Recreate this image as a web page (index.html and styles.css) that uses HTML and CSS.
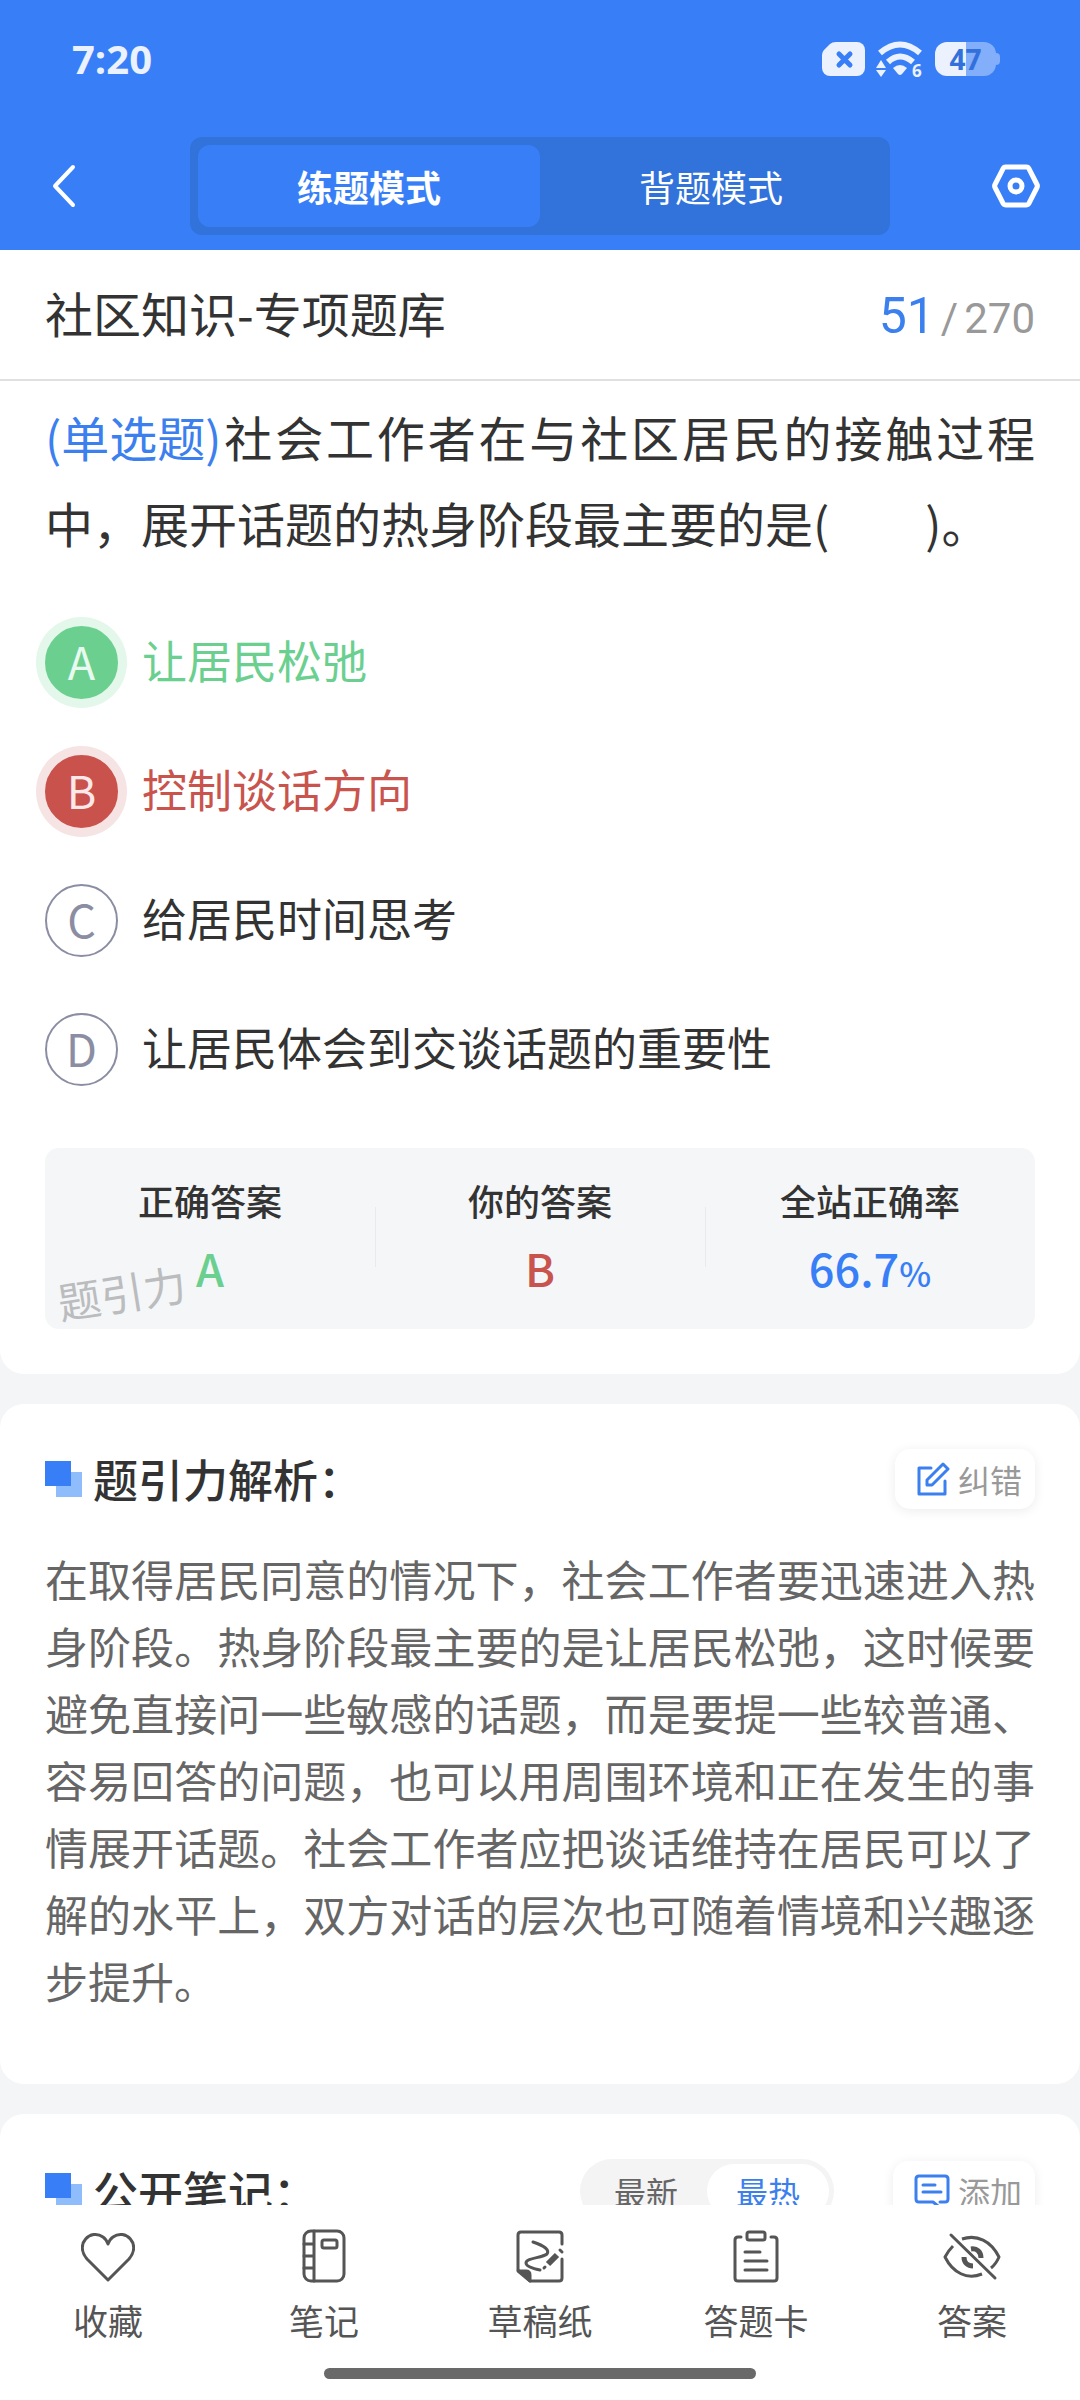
FILE: index.html
```html
<!DOCTYPE html>
<html lang="zh-CN">
  <head>
    <meta charset="utf-8" />
    <title>社区知识-专项题库</title>
    <meta name="viewport" content="width=device-width, initial-scale=1" />
    <link rel="stylesheet" href="styles.css">
  </head>

  <body>
    <header class="top">
      <div class="status">
        <span class="time">7:20</span>
        <div class="status-icons">
          <svg width="43" height="36" viewBox="0 0 43 36">
            <path d="M14 1h21a8 8 0 0 1 8 8v18a8 8 0 0 1-8 8H8a8 8 0 0 1-8-8V14q0-3 2-5l6-6q2-2 6-2z" fill="#ebf2fe"/>
            <path d="M17 13l11 11M28 13L17 24" stroke="#387ff7" stroke-width="5" stroke-linecap="round"/>
          </svg>
          <svg width="48" height="36" viewBox="0 0 48 36">
            <g fill="none" stroke="#ebf2fe" stroke-width="6">
              <path d="M4 12Q24-5 44 12"/>
              <path d="M12 21Q24 10 37 21"/>
            </g>
            <g fill="#ebf2fe">
              <path d="M17 27q7-6 14 0l-5 6q-2 2-4 0z"/>
              <path d="M0 27l5-8 5 8zM0 29h10l-5 7z"/>
            </g>
            <text class="wifi-gen" x="36" y="36">6</text>
          </svg>
          <div class="battery">
            <span>47</span>
          </div>
        </div>
      </div>

      <nav class="nav">
        <button class="nav-btn" type="button" aria-label="返回">
          <svg width="24" height="44" viewBox="0 0 24 44" fill="none" stroke="#fff" stroke-width="4" stroke-linecap="round" stroke-linejoin="round">
            <path d="M21 3L3 22l18 19"/>
          </svg>
        </button>
        <div class="modes">
          <button class="mode active" type="button">练题模式</button>
          <button class="mode" type="button">背题模式</button>
        </div>
        <button class="nav-btn" type="button" aria-label="设置">
          <svg width="48" height="44" viewBox="0 0 48 44" fill="none" stroke="#fff" stroke-width="5" stroke-linejoin="round">
            <path d="M13.500 3h21q1.500 0 2.300 1.300L45 20.500q.8 1.500 0 3l-8.200 16.200Q36 41 34.500 41h-21q-1.500 0-2.300-1.300L3 23.500q-.8-1.500 0-3L11.200 4.300Q12 3 13.500 3z"/>
            <circle cx="24" cy="22" r="6"/>
          </svg>
        </button>
      </nav>
    </header>

    <main class="content">
      <section class="card question-card">
        <div class="bank">
          <h1>社区知识-专项题库</h1>
          <p class="count"><b>51</b><span>/</span><span>270</span></p>
        </div>

        <div class="question">
          <p class="stem"><span class="type">(单选题)</span>社会工作者在与社区居民的接触过程中，展开话题的热身阶段最主要的是(&emsp;&emsp;)。</p>

          <div class="options">
            <button class="option right" type="button"><i>A</i>让居民松弛</button>
            <button class="option wrong" type="button"><i>B</i>控制谈话方向</button>
            <button class="option" type="button"><i>C</i>给居民时间思考</button>
            <button class="option" type="button"><i>D</i>让居民体会到交谈话题的重要性</button>
          </div>

          <div class="result">
            <dl>
              <dt>正确答案</dt>
              <dd class="green">A</dd>
            </dl>
            <dl>
              <dt>你的答案</dt>
              <dd class="red">B</dd>
            </dl>
            <dl>
              <dt>全站正确率</dt>
              <dd class="blue">66.7<small>%</small></dd>
            </dl>
            <span class="watermark">题引力</span>
          </div>
        </div>
      </section>

      <section class="card">
        <div class="card-head">
          <h2>题引力解析：</h2>
          <button class="chip" type="button">
            <svg width="34" height="34" viewBox="0 0 34 34" fill="none" stroke="#3b80ee" stroke-width="3" stroke-linecap="round" stroke-linejoin="round">
              <path d="M15 6H3v26h26V19"/>
              <path d="M27 2l5 5-16 16h-5v-5z"/>
            </svg>
            纠错
          </button>
        </div>
        <p class="analysis-text">在取得居民同意的情况下，社会工作者要迅速进入热身阶段。热身阶段最主要的是让居民松弛，这时候要避免直接问一些敏感的话题，而是要提一些较普通、容易回答的问题，也可以用周围环境和正在发生的事情展开话题。社会工作者应把谈话维持在居民可以了解的水平上，双方对话的层次也可随着情境和兴趣逐步提升。</p>
      </section>

      <section class="card">
        <div class="card-head">
          <h2>公开笔记：</h2>
          <div class="head-actions">
            <div class="sort">
              <button type="button">最新</button>
              <button class="active" type="button">最热</button>
            </div>
            <button class="chip" type="button">
              <svg width="36" height="34" viewBox="0 0 36 34" fill="none" stroke="#3b80ee" stroke-width="3" stroke-linecap="round" stroke-linejoin="round">
                <path d="M26 28h5q3 0 3-3V5q0-3-3-3H5Q2 2 2 5v20q0 3 3 3h14l5 4"/>
                <path d="M9 11h12M9 18h18"/>
              </svg>
              添加
            </button>
          </div>
        </div>
      </section>
    </main>

    <footer class="bottom">
      <nav class="tabs">
        <a href="#">
          <svg width="54" height="54" viewBox="0 0 54 54">
            <path d="M27 51L6 30C-7 15 10-1 22 8q3 2 5 7 2-5 5-7C44-1 61 15 48 30z"/>
          </svg>
          收藏
        </a>
        <a href="#">
          <svg width="54" height="54" viewBox="0 0 54 54">
            <rect x="7" y="2" width="40" height="50" rx="7"/>
            <path d="M17 2v50M7 15h10M7 27h10M7 39h10"/>
            <rect x="25" y="11" width="15" height="8" rx="2"/>
          </svg>
          笔记
        </a>
        <a href="#">
          <svg width="54" height="54" viewBox="0 0 54 54">
            <path d="M49 15V6q0-3-3-3H8Q5 3 5 6v35l12 11h29q3 0 3-3V30"/>
            <path d="M5 42h8q4 0 4 4v6z" fill="#555"/>
            <path d="M20 13q18 6 14 12c-5 4-21 4-21 9 0 4 9 6 14 7"/>
            <path d="M44 26L35 35" stroke-width="6" stroke-linecap="butt"/>
            <path d="M47 21l2 2M32 38l-1 1"/>
          </svg>
          草稿纸
        </a>
        <a href="#">
          <svg width="54" height="54" viewBox="0 0 54 54">
            <path d="M12 8H9q-3 0-3 3v38q0 3 3 3h36q3 0 3-3V11q0-3-3-3h-3"/>
            <rect x="18" y="3" width="18" height="8" rx="2"/>
            <path d="M16 23h15M16 32h22M16 41h22"/>
          </svg>
          答题卡
        </a>
        <a href="#">
          <svg width="58" height="54" viewBox="0 0 58 54">
            <path d="M19 10c15-5 29 2 37 18q-3 7-8 11M10 17Q5 22 2 28c8 16 22 23 37 17" stroke-linecap="butt"/>
            <path d="M28 20c6-1 10 3 10 9M21 28c0 6 4 9 9 9" stroke-width="5" stroke-linecap="butt"/>
            <path d="M8 6l44 43"/>
          </svg>
          答案
        </a>
      </nav>
      <div class="home-bar"></div>
    </footer>
  </body>
</html>
```

FILE: styles.css
```css
* {
    box-sizing: border-box;
    margin: 0;
    padding: 0;
}

body {
    display: flex;
    flex-direction: column;
    height: 100vh;

    background-color: #f4f5f7;
    color: #333;
    font-family: 'Noto Sans CJK SC', sans-serif;
}

button {
    background: none;
    border: none;
    color: inherit;
    font: inherit;
    cursor: pointer;
}

svg {
    display: block;
    flex: none;
}

/* Header */
.top {
    flex: none;
    background-color: #387ff7;
    color: #fff;
}

.status {
    display: flex;
    align-items: center;
    justify-content: space-between;
    height: 118px;
    padding: 0 84px 0 72px;
}

.time {
    color: #ebf2fe;
    font: 700 40px/1 'Open Sans', sans-serif;
}

.status-icons {
    display: flex;
    align-items: center;
    gap: 11px;
}

.wifi-gen {
    fill: #ebf2fe;
    font: 700 17px 'Open Sans', sans-serif;
}

.battery {
    position: relative;
    width: 61px;
    height: 34px;
    border-radius: 12px;
    background: linear-gradient(90deg, #ebf2fe 50%, #82aefa 50%);

    color: #3270dc;
    font: 700 28px/34px 'Open Sans', sans-serif;
    text-align: center;
}

.battery::after {
    content: '';
    position: absolute;
    top: 11px;
    right: -4px;
    width: 4px;
    height: 12px;
    border-radius: 0 4px 4px 0;
    background-color: #82aefa;
}

.nav {
    display: flex;
    align-items: center;
    justify-content: space-between;
    height: 132px;
    padding: 4px 40px 0;
}

.nav-btn {
    display: flex;
    justify-content: center;
    width: 48px;
}

.modes {
    display: flex;
    width: 70%;
    padding: 8px;
    border-radius: 12px;
    background-color: #3172db;
}

.mode {
    flex: 1;
    height: 82px;
    border-radius: 12px;
    font-size: 36px;
}

.mode.active {
    background-color: #387ff7;
    font-weight: 700;
}

/* Scrolling content */
.content {
    display: flex;
    flex: 1;
    flex-direction: column;
    gap: 30px;
    overflow-y: auto;
    scrollbar-width: none;
}

.card {
    flex: none;
    padding: 45px 45px 70px;
    border-radius: 24px;
    background-color: #fff;
}

.question-card {
    padding: 0;
    border-radius: 0 0 24px 24px;
}

.bank {
    display: flex;
    align-items: baseline;
    justify-content: space-between;
    height: 131px;
    padding: 32px 45px 0;
    border-bottom: 2px solid #e0e0e0;
}

.bank h1 {
    font-size: 48px;
    font-weight: 400;
    line-height: 60px;
}

.count {
    display: flex;
    align-items: baseline;
    gap: 6px;

    color: #999;
    font: 42px/60px Roboto, sans-serif;
}

.count b {
    color: #3b80ee;
    font-size: 50px;
    font-weight: 400;
}

.question {
    padding: 12px 45px 45px;
}

.stem {
    font-size: 48px;
    line-height: 86px;
    text-align: justify;
}

.type {
    display: inline-block;
    color: #3b80ee;
}

.options {
    display: flex;
    flex-direction: column;
    gap: 56px;
    margin: 61px 0 62px;
}

.option {
    display: flex;
    align-items: flex-start;
    gap: 24px;
    font-size: 45px;
    line-height: 68px;
    text-align: left;
}

.option i {
    width: 73px;
    height: 73px;
    border: 2px solid #8b8ea3;
    border-radius: 50%;

    color: #8b8ea3;
    font-style: normal;
    line-height: 66px;
    text-align: center;
}

.option.right {
    color: #6bd08f;
}

.option.wrong {
    color: #c9544e;
}

.option.right i {
    border-color: #6bd08f;
    background-color: #6bd08f;
    box-shadow: 0 0 0 9px #e3f7eb;
    color: #e8faf0;
}

.option.wrong i {
    border-color: #c9524c;
    background-color: #c9524c;
    box-shadow: 0 0 0 9px #f6e4e4;
    color: #fbe9e9;
}

.result {
    position: relative;
    display: flex;
    padding: 25px 0 28px;
    border-radius: 14px;
    background-color: #f4f6f8;
    text-align: center;
}

.result dl {
    position: relative;
    flex: 1;
}

.result dl + dl::before {
    content: '';
    position: absolute;
    top: 34px;
    left: 0;
    width: 1px;
    height: 60px;
    background-color: #e8eaee;
}

.result dt {
    font-size: 36px;
    font-weight: 500;
    line-height: 54px;
}

.result dd {
    margin-top: 8px;
    font-size: 45px;
    font-weight: 500;
    line-height: 66px;
}

.result small {
    font-size: 34px;
    line-height: 1;
}

.green {
    color: #6bd08f;
}

.red {
    color: #c9544e;
}

.blue {
    color: #387ff7;
}

.watermark {
    position: absolute;
    bottom: 8px;
    left: 12px;
    color: #bbbcbe;
    font-size: 43px;
    line-height: 60px;
    transform: rotate(-9deg);
}

/* Analysis and notes */
.card-head {
    display: flex;
    align-items: center;
    justify-content: space-between;
}

.card-head h2 {
    display: flex;
    align-items: center;
    gap: 11px;
    font-size: 45px;
    font-weight: 500;
    line-height: 60px;
}

.card-head h2::before {
    content: '';
    width: 37px;
    height: 36px;
    background:
        linear-gradient(#387ff7, #387ff7) 0 0 / 26px 25px no-repeat,
        linear-gradient(#8fbcfb, #8fbcfb) 100% 100% / 26px 25px no-repeat;
}

.chip {
    display: flex;
    align-items: center;
    gap: 8px;
    height: 60px;
    padding: 0 13px 0 21px;
    border-radius: 15px;
    background-color: #fff;
    box-shadow: 0 2px 12px rgba(0, 0, 0, 0.08);

    color: #999;
    font-size: 32px;
    line-height: 56px;
}

.analysis-text {
    margin-top: 36px;
    color: #666;
    font-size: 43px;
    line-height: 67px;
    text-align: justify;
}

.head-actions {
    display: flex;
    align-items: center;
    gap: 59px;
}

.sort {
    display: flex;
    padding: 5px;
    border-radius: 34px;
    background-color: #f4f4f5;
}

.sort button {
    width: 122px;
    height: 54px;
    border-radius: 27px;
    color: #666;
    font-size: 32px;
    line-height: 54px;
}

.sort button.active {
    background-color: #fff;
    color: #3b80ee;
}

/* Bottom bar */
.bottom {
    flex: none;
    padding: 24px 0 21px;
    background-color: #fff;
}

.tabs {
    display: flex;
}

.tabs a {
    display: flex;
    flex: 1;
    flex-direction: column;
    align-items: center;
    gap: 11px;

    color: #555;
    font-size: 35px;
    line-height: 52px;
    text-decoration: none;
}

.tabs svg {
    fill: none;
    stroke: #555;
    stroke-width: 3;
    stroke-linecap: round;
    stroke-linejoin: round;
}

.home-bar {
    width: 40%;
    height: 11px;
    margin: 22px auto 0;
    border-radius: 6px;
    background-color: #696969;
}
```
